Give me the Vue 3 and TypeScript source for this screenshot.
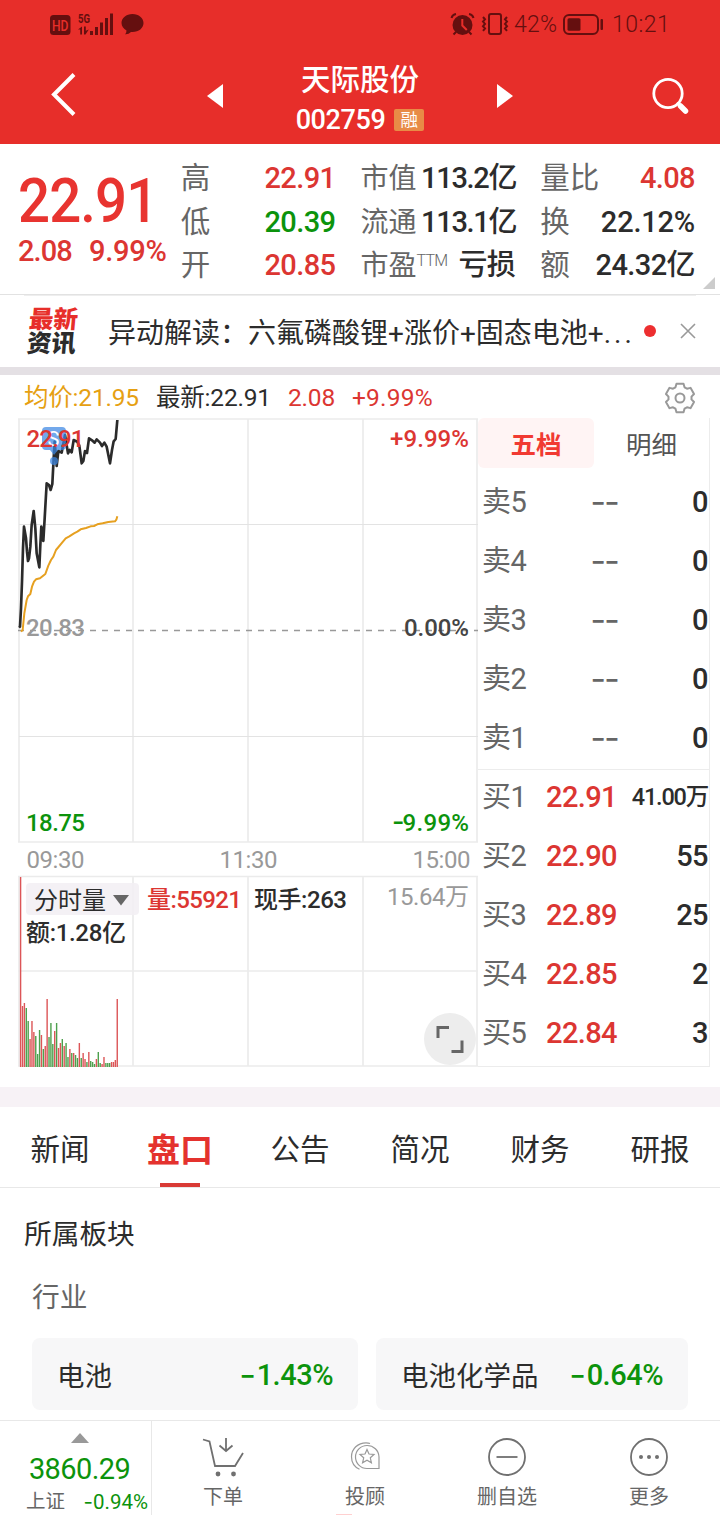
<script setup lang="ts">
interface Field { label: string; sup?: string; value: string; tone?: string }
interface Level { name: string; price: string; qty: string; small?: boolean }

const columns: Field[][] = [
  [
    { label: '高', value: '22.91', tone: 'up' },
    { label: '低', value: '20.39', tone: 'down' },
    { label: '开', value: '20.85', tone: 'up' },
  ],
  [
    { label: '市值', value: '113.2亿' },
    { label: '流通', value: '113.1亿' },
    { label: '市盈', sup: 'TTM', value: '亏损' },
  ],
  [
    { label: '量比', value: '4.08', tone: 'up' },
    { label: '换', value: '22.12%' },
    { label: '额', value: '24.32亿' },
  ],
]

const sells: Level[] = ['卖5', '卖4', '卖3', '卖2', '卖1'].map((name) => ({ name, price: '--', qty: '0' }))
const buys: Level[] = [
  { name: '买1', price: '22.91', qty: '41.00万', small: true },
  { name: '买2', price: '22.90', qty: '55' },
  { name: '买3', price: '22.89', qty: '25' },
  { name: '买4', price: '22.85', qty: '2' },
  { name: '买5', price: '22.84', qty: '3' },
]

const tabs = ['新闻', '盘口', '公告', '简况', '财务', '研报']

// Polyline points use a grid of three units per pixel.
const pricePoints =
  '57,758 60,755 63,700 66,620 69,520 72,455 78,490 81,530 84,558 87,550 91,515 95,450 101,408 106,460 110,535 118,577 121,510 124,455 130,498 134,430 140,325 147,330 152,345 157,327 161,250 164,200 170,273 175,228 185,233 195,180 204,235 209,225 215,232 221,195 232,200 238,212 245,265 250,258 255,228 261,234 267,190 276,196 284,203 290,193 300,203 306,213 313,203 320,215 330,265 336,225 341,199 347,192 352,135'
const averagePoints =
  '63,770 68,765 73,715 80,675 84,664 91,657 96,635 102,620 108,613 120,610 136,597 145,572 153,555 160,545 168,525 182,508 197,490 208,484 222,475 232,470 242,463 258,459 272,454 282,453 292,448 308,445 325,441 345,439 349,434 352,424'

const volumes =
  'r190 r61 r64 g59 g46 r28 r46 r35 g31 g13 g37 r32 g18 r21 r68 g30 g44 g23 r36 g44 r19 r24 g28 r21 g24 g10 r18 g14 r14 g12 g9 r24 g9 r14 r8 g5 r15 g6 g5 g3 r8 g15 g4 r3 r10 g4 g4 g4 r5 r5 r7 r68'
    .split(' ')
    .map((v, i) => {
      const h = Number(v.slice(1))
      return { x: 19.9 + i * 1.895, y: 1067 - h, h, up: v[0] === 'r' }
    })

const gearPoints = Array.from({ length: 6 }, (_, i) =>
  [[-23, 11.6], [-14, 14.6], [14, 14.6], [23, 11.6]].map(([a, r]) => {
    const t = ((i * 60 + a - 90) * Math.PI) / 180
    return `${(17 + r * Math.cos(t)).toFixed(2)},${(17 + r * Math.sin(t)).toFixed(2)}`
  }).join(' '),
).join(' ')
</script>

<template>
  <div class="app">
    <header class="top">
      <div class="status">
        <svg class="status-left" width="100" height="26" viewBox="48 11 100 26">
          <rect x="50" y="15" width="20.5" height="20" rx="3.5" />
          <text class="hd" x="52" y="30.5" textLength="16.5" lengthAdjust="spacingAndGlyphs">HD</text>
          <text class="g5" x="78" y="23" textLength="12" lengthAdjust="spacingAndGlyphs">5G</text>
          <path d="M78 29.500l4-3v8h-1.800v-5zM84 26.500h1.800v4.200l3-1.200-3.300 5H84z" />
          <path d="M90 31h3v4h-3zM95 27h3v8h-3zM100 22.500h3V35h-3zM105 18h3v17h-3zM110 13.500h3V35h-3z" />
          <path d="M132.500 14c6.300 0 11 4 11 9s-4.700 9-11 9h-1.500q-2.500 2.500-6 2.200 1.500-1.200 1.500-3.700c-3-1.600-5-4.300-5-7.500 0-5 4.700-9 11-9z" />
        </svg>
        <div class="status-right">
          <svg width="56" height="26" viewBox="450 11 56 26">
            <circle cx="462.500" cy="25" r="10" />
            <path class="dark-line" d="M451.500 18q1-3.500 4.500-4M473.500 18q-1-3.500-4.500-4M456 32l-2.500 2.500M469 32l2.500 2.500" />
            <path class="red-line" d="M462.300 19v6.500l4.500 4.500" />
            <rect class="dark-line" x="489" y="14" width="12" height="20" rx="2" />
            <path class="dark-line" d="M483 17l2 2.300-2 2.300 2 2.300-2 2.300 2 2.300-2 2.300M507 17l-2 2.300 2 2.300-2 2.300 2 2.300-2 2.300 2 2.300" />
          </svg>
          <span class="percent">42%</span>
          <svg width="42" height="24" viewBox="562 12 42 24">
            <rect class="dark-line" x="564" y="15" width="34" height="19" rx="5" />
            <rect x="567.500" y="18.300" width="13" height="12.500" rx="1.500" />
            <rect x="600.500" y="19" width="2.500" height="11" rx="1" />
          </svg>
          <span class="clock">10:21</span>
        </div>
      </div>
      <div class="nav">
        <svg class="back" width="30" height="46" viewBox="49 72 30 46"><path d="M74 73.500L54 93.500l20 20" /></svg>
        <svg class="arrow" width="18" height="26" viewBox="206 83 18 26"><path d="M207 96l16-12v24z" /></svg>
        <div class="title">
          <div class="name">天际股份</div>
          <div class="code"><span>002759</span><i>融</i></div>
        </div>
        <svg class="arrow" width="18" height="26" viewBox="496 83 18 26"><path d="M513 96l-16-12v24z" /></svg>
        <svg class="search" width="38" height="38" viewBox="651 77 38 38">
          <circle cx="668" cy="93.500" r="14.200" /><path class="thin" d="M678 103.500l3 3" /><path d="M680.500 106l5 5" />
        </svg>
      </div>
    </header>

    <section class="quote">
      <div class="last">
        <div class="price">22.91</div>
        <div class="delta"><span>2.08</span><span>9.99%</span></div>
      </div>
      <div v-for="(col, c) in columns" :key="c" class="col">
        <div v-for="f in col" :key="f.label" class="field">
          <span class="label">{{ f.label }}<sup v-if="f.sup">{{ f.sup }}</sup></span>
          <b :class="f.tone">{{ f.value }}</b>
        </div>
      </div>
      <svg class="corner" width="12" height="12" viewBox="0 0 12 12"><path d="M12 0v12H0z" /></svg>
    </section>

    <section class="news">
      <div class="news-logo"><b>最新</b><b class="second">资讯</b></div>
      <p class="headline">异动解读：六氟磷酸锂+涨价+固态电池+<span>...</span></p>
      <i class="dot"></i>
      <svg class="close" width="16" height="16" viewBox="0 0 16 16"><path d="M1 1l14 14M15 1L1 15" /></svg>
    </section>

    <section class="market">
      <div class="market-head">
        <span class="avg">均价:21.95</span>
        <span class="latest">最新:22.91</span>
        <span class="red">2.08</span>
        <span class="red wide">+9.99%</span>
        <svg class="gear" width="34" height="34" viewBox="0 0 34 34">
          <polygon :points="gearPoints" /><circle cx="17" cy="17" r="4.500" />
        </svg>
      </div>
      <div class="market-body">
        <svg class="chart" width="478" height="650" viewBox="0 418 478 650">
          <g class="grid">
            <path d="M18 419H478M18 842H478M18 876.500H478M18 971H478M18 1066H478" />
            <path d="M19 419V842M133 419V842M248 419V842M363 419V842M477 419V842M19 876V1066M133 876V1066M248 876V1066M363 876V1066M477 876V1066" />
            <path class="hair" d="M19 524.500H478M19 736.500H478" />
          </g>
          <path class="dash" d="M18 630.500H478" />
          <g transform="translate(0 375) scale(.33333)">
            <polyline class="avg-line" :points="averagePoints" />
            <polyline class="price-line" :points="pricePoints" />
          </g>
          <g class="marker">
            <path d="M46 427H62a4 4 0 0 1 4 4V446a4 4 0 0 1-4 4H58l-4 5-4-5H46a4 4 0 0 1-4-4V431a4 4 0 0 1 4-4z" />
            <circle cx="54" cy="461" r="4" />
            <text x="47.500" y="446">S</text>
          </g>
          <g class="labels">
            <text class="up" x="26.500" y="447" textLength="58">22.91</text>
            <text class="up" x="390" y="447" textLength="79">+9.99%</text>
            <text class="mute" x="26" y="635.700" textLength="59">20.83</text>
            <text class="mid" x="404" y="635.700" textLength="65">0.00%</text>
            <text class="down" x="26" y="831" textLength="59">18.75</text>
            <text class="down" x="402.500" y="831" textLength="66.500">9.99%</text>
            <text class="down sign" x="392" y="831">-</text>
            <g class="time">
              <text x="26.500" y="868" textLength="58">09:30</text>
              <text x="219.500" y="868" textLength="58">11:30</text>
              <text x="412.500" y="868" textLength="58">15:00</text>
            </g>
          </g>
          <g class="bars">
            <rect v-for="(b, i) in volumes" :key="i" :class="{ rise: b.up }" :x="b.x" :y="b.y" width="1.400" :height="b.h" />
          </g>
          <rect class="pill" x="26" y="883" width="113" height="32" rx="4" />
          <path class="caret" d="M113 895h16l-8 10.500z" />
          <g class="labels">
            <text class="ink plain" x="34" y="908.500" textLength="72">分时量</text>
            <text class="up" x="147" y="908" textLength="95">量:55921</text>
            <text class="ink" x="254" y="908" textLength="93">现手:263</text>
            <text class="ink" x="26" y="941" textLength="100">额:1.28亿</text>
            <text class="mute plain" x="387" y="904.500" textLength="82">15.64万</text>
          </g>
          <circle class="expand" cx="450" cy="1039" r="26" />
          <path class="expand-icon" d="M438 1038v-10.500h11M462 1040.500v11h-10.500" />
        </svg>
        <div class="book">
          <div class="book-tabs"><b>五档</b><span>明细</span></div>
          <div v-for="l in sells" :key="l.name" class="level">
            <span>{{ l.name }}</span><em class="none">{{ l.price }}</em><b>{{ l.qty }}</b>
          </div>
          <div class="buys">
            <div v-for="l in buys" :key="l.name" class="level">
              <span>{{ l.name }}</span><em>{{ l.price }}</em><b :class="{ small: l.small }">{{ l.qty }}</b>
            </div>
          </div>
        </div>
      </div>
    </section>

    <nav class="tabs">
      <div v-for="(t, i) in tabs" :key="t" class="tab" :class="{ active: i === 1 }">{{ t }}</div>
    </nav>

    <section class="sector">
      <h2>所属板块</h2>
      <h3>行业</h3>
      <div class="cards">
        <div class="card first"><span>电池</span><b><i>-</i>1.43%</b></div>
        <div class="card"><span>电池化学品</span><b><i>-</i>0.64%</b></div>
      </div>
    </section>

    <footer class="bottom">
      <div class="index">
        <svg width="18" height="10" viewBox="0 0 18 10"><path d="M9 0l9 10H0z" /></svg>
        <strong>3860.29</strong>
        <div class="index-row"><span>上证</span><em><i>-</i>0.94%</em></div>
      </div>
      <div class="action">
        <svg width="44" height="40" viewBox="201 1437 44 40">
          <path d="M203 1439.500l6.500 2 5.500 24.500h20l8-13M226 1438v13M219.500 1445.500l6.500 5.500 6.500-5.500" />
          <circle class="solid" cx="218" cy="1474" r="2.400" /><circle class="solid" cx="233.500" cy="1474" r="2.400" />
        </svg>
        <span>下单</span>
      </div>
      <div class="action advisor">
        <svg width="44" height="40" viewBox="343 1437 44 40">
          <path d="M367 1445.500a11.500 11.500 0 0 0 0 23h12v-11.500a11.800 11.800 0 0 0-12-11.500zM370 1443.500q-1.500-.7-4-.7c-8 0-14.500 6-14.500 14 0 6 3.500 10.500 8 12.500" />
          <path d="M367 1449.500l2 4.500 5 .5-3.700 3.300 1.100 4.900-4.400-2.500-4.400 2.500 1.100-4.900-3.700-3.300 5-.5z" />
        </svg>
        <span>投顾</span>
      </div>
      <div class="action">
        <svg width="44" height="40" viewBox="0 0 44 40"><circle cx="22" cy="20" r="18" /><path d="M11.500 20h21" /></svg>
        <span>删自选</span>
      </div>
      <div class="action">
        <svg width="44" height="40" viewBox="0 0 44 40">
          <circle cx="22" cy="20" r="18" />
          <circle class="solid" cx="14" cy="20" r="2" /><circle class="solid" cx="22" cy="20" r="2" /><circle class="solid" cx="30" cy="20" r="2" />
        </svg>
        <span>更多</span>
      </div>
    </footer>
  </div>
</template>

<style>
body { margin: 0; background: #fff; }
</style>

<style scoped>
.app { width: 720px; height: 1515px; overflow: hidden; background: #fff; color: #2c2c2c; font-family: Roboto, "Noto Sans CJK SC", sans-serif; box-sizing: border-box; }
.app * { box-sizing: border-box; }
svg { display: block; flex: none; overflow: visible; }
i, em { font-style: normal; }
.up { color: #dc3632; fill: #dc3632; }
.down { color: #0c930c; fill: #0c930c; }

.top { height: 144px; background: #e72e2a; color: #fff; }
.status { height: 48px; padding: 11px 51px 11px 48px; display: flex; justify-content: space-between; align-items: center; fill: #650f0f; color: #650f0f; }
.hd { font: 500 15px Roboto; fill: #e72e2a; }
.g5 { font: 700 12.500px Roboto; }
.status-right { display: flex; align-items: center; font-size: 23px; font-weight: 300; line-height: 26px; }
.status-right span { padding-top: 2px; }
.percent { width: 48px; margin-left: 8px; letter-spacing: .3px; }
.clock { width: 57px; margin-left: 8px; letter-spacing: .5px; }
.dark-line { fill: none; stroke: #650f0f; stroke-width: 2; }
.red-line { fill: none; stroke: #e72e2a; stroke-width: 2; }
.nav { height: 96px; display: flex; align-items: center; padding: 0 31px 0 49px; }
.back path { fill: none; stroke: #fff; stroke-width: 4; }
.arrow { fill: #fff; margin-left: 127px; }
.title { width: 272px; text-align: center; padding-top: 8px; }
.title + .arrow { margin-left: 0; }
.name { font-size: 29.500px; font-weight: 500; line-height: 40px; margin-top: -1px; }
.code { display: flex; justify-content: center; align-items: center; height: 40px; font-size: 27px; font-weight: 500; letter-spacing: -.4px; padding-top: 1px; }
.code i { width: 30px; height: 22px; margin-left: 9px; border-radius: 2px; background: #e88b46; font-size: 17.500px; font-weight: 400; line-height: 22px; letter-spacing: 0; }
.search { margin-left: 137px; }
.search circle, .search path { fill: none; stroke: #fff; stroke-width: 2.800; }
.search path { stroke-width: 5.500; stroke-linecap: round; }
.search .thin { stroke-width: 3; }

.quote { height: 151px; border-bottom: 1px solid #e2e2e2; display: flex; padding-top: 13px; position: relative; }
.last { width: 181px; padding-left: 18px; color: #e83430; }
.price { font-size: 61px; font-weight: 500; letter-spacing: -1px; line-height: 70px; margin-top: 9px; margin-bottom: -1px; transform: scaleX(.925); transform-origin: 0 50%; }
.delta { display: flex; gap: 17px; font-size: 29px; letter-spacing: -.9px; line-height: 32px; color: #dc3632; font-weight: 500; }
.delta span:last-child { letter-spacing: -.2px; }
.col { width: 155px; margin-right: 25px; }
.field { display: flex; justify-content: space-between; height: 43.500px; line-height: 43.500px; white-space: nowrap; }
.label { color: #666; font-size: 29.500px; font-weight: 400; }
.col:nth-child(3) .label { font-size: 28px; }
.col:nth-child(3) b { letter-spacing: -1.300px; margin-right: -1px; }
.col:nth-child(3) .field:last-child b { letter-spacing: -.6px; margin-right: 0; }
sup { font-size: 16px; font-weight: 300; letter-spacing: -.8px; vertical-align: 9px; line-height: 0; }
.field b { font-size: 29px; font-weight: 500; letter-spacing: -.6px; }
.col:nth-child(4) .field:nth-child(2) b { letter-spacing: -.2px; }
.corner { position: absolute; right: 5px; bottom: 5px; fill: #ccc; }

.news { height: 72px; display: flex; align-items: center; padding-left: 27px; position: relative; }
.news::before { content: ""; position: absolute; left: 24px; right: 24px; top: 0; height: 1px; background: #eee; }
.news-logo { width: 81px; height: 48px; transform: translate(1px, 1px) skewX(-5deg); font-size: 24.500px; line-height: 24px; color: #e72e2a; }
.news-logo b { display: block; height: 24px; font-weight: 900; }
.news-logo .second { color: #2c2c2c; }
.headline { margin: 0; padding-top: 6px; width: 536px; font-size: 28px; font-weight: 400; line-height: 40px; white-space: nowrap; }
.headline span { letter-spacing: 3px; }
.dot { width: 12px; height: 12px; border-radius: 50%; background: #ed2e30; }
.close { margin-left: 24px; fill: none; stroke: #999; stroke-width: 1.600; }

.market { border-top: 8px solid #e4e0e4; border-bottom: 20px solid #f7f2f6; height: 740px; }
.market-head { height: 43px; display: flex; align-items: center; padding: 3px 23px 0 24px; font-size: 24.500px; line-height: 30px; letter-spacing: -.2px; }
.avg { color: #e6a012; width: 132px; }
.latest { width: 132px; }
.red { color: #dc3632; margin-right: 17px; }
.wide { letter-spacing: .2px; }
.gear { margin-left: auto; fill: none; stroke: #999; stroke-width: 2; stroke-linejoin: round; }
.market-body { display: flex; }
.grid path { stroke: #ebebeb; stroke-width: 1.700; fill: none; }
.grid .hair { stroke-width: 1; stroke: #e3e3e3; }
.dash { stroke: #999; stroke-width: 1.600; stroke-dasharray: 6 6; }
.price-line, .avg-line { fill: none; stroke: #2b2b2b; stroke-width: 8; stroke-linejoin: round; }
.avg-line { stroke: #e6a020; stroke-width: 6; }
.marker { fill: #3b86e3; fill-opacity: .72; }
.marker text { fill: #fff; fill-opacity: 1; font-size: 20px; }
.labels text { font-size: 24px; font-weight: 500; }
.labels .mute { fill: #999; }
.labels .mid { fill: #444; }
.labels .ink { fill: #2c2c2c; }
.labels .plain, .labels .time text { font-weight: 400; }
.labels .time text { fill: #999; }
.labels .sign { font-family: Inter; font-size: 27px; }
.bars rect { fill: #4da04d; }
.bars .rise { fill: #dc5557; }
.pill { fill: #f2eff3; opacity: .85; }
.caret { fill: #666; }
.expand { fill: #ededed; }
.expand-icon { fill: none; stroke: #666; stroke-width: 3; }

.book { width: 232px; height: 649px; border: 1px solid #ececec; border-width: 0 1px 1px 0; }
.book-tabs { height: 54px; display: flex; align-items: flex-start; line-height: 54px; text-align: center; font-size: 25.500px; color: #555; }
.book-tabs b { width: 116px; height: 50px; background: #fff4f4; color: #f13a32; border-radius: 6px; margin-right: 0; }
.book-tabs span { flex: 1; }
.level { height: 59px; display: grid; grid-template-columns: 64px 74px 1fr; line-height: 60px; padding: 0 1px 0 4px; font-size: 29px; }
.level > * { height: 59px; }
.level span { color: #666; font-weight: 400; letter-spacing: -.5px; }
.level em { color: #dc3632; font-weight: 500; letter-spacing: -.6px; }
.level .none { color: #666; font-family: Inter; font-size: 29px; letter-spacing: -1.500px; text-align: right; margin-right: 2px; transform: scaleX(1.150); transform-origin: 100% 50%; }
.level b { text-align: right; font-weight: 500; letter-spacing: -.6px; white-space: nowrap; }
.level .small { font-size: 23.500px; letter-spacing: -1.200px; }
.buys { position: relative; }
.buys::before { content: ""; position: absolute; left: 0; right: 0; top: 2px; height: 1px; background: #ececec; }

.tabs { height: 81px; border-bottom: 1px solid #e8e8e8; display: flex; }
.tab { width: 120px; text-align: center; font-size: 29.500px; line-height: 87px; height: 80px; position: relative; }
.active { color: #e4322e; font-size: 33px; font-weight: 700; }
.active::after { content: ""; position: absolute; left: 40px; bottom: 0; width: 40px; height: 4px; background: #d93a35; }

.sector { height: 232px; padding: 27px 32px 0; }
h2, h3 { margin: 0; font-size: 27.700px; line-height: 40px; font-weight: 400; }
h2 { margin-left: -8px; }
h3 { margin-top: 23px; color: #666; }
.cards { display: flex; gap: 18px; margin-top: 20px; }
.card { width: 312px; height: 72px; border-radius: 8px; background: #f7f7f8; display: flex; justify-content: space-between; align-items: center; padding: 2px 25px 0; font-size: 27.500px; line-height: 40px; }
.card span { padding-top: 3px; }
.first { width: 326px; }
.card b { color: #0c930c; font-weight: 500; font-size: 29px; letter-spacing: -.5px; }
.card i { display: inline-block; font-family: Inter; letter-spacing: 0; margin-right: 2px; transform: scaleX(1.250); }

.bottom { height: 95px; border-top: 1px solid #e8e8e8; display: flex; background: #fff; }
.index { width: 152px; border-right: 1px solid #e8e8e8; padding-top: 12px; text-align: center; color: #0c930c; }
.index svg { margin: 0 auto 0 71px; fill: #999; }
.index strong { display: block; margin-top: 8px; padding-left: 8px; font-size: 29px; font-weight: 400; line-height: 36px; letter-spacing: -.6px; }
.index-row { display: flex; justify-content: space-between; padding: 1px 3px 0 26px; font-size: 20.500px; line-height: 28px; }
.index-row span { color: #666; font-size: 19.500px; }
.index-row i { font-family: Inter; }
.action { width: 142px; display: flex; flex-direction: column; align-items: center; padding-top: 16px; color: #666; font-size: 20px; line-height: 28px; }
.action svg { fill: none; stroke: #707070; stroke-width: 1.800; }
.action span { margin-top: 6px; }
.action .solid { fill: #707070; stroke: none; }
.advisor svg { stroke: #999; stroke-width: 1.200; }
.advisor { position: relative; }
.advisor::after { content: ""; position: absolute; left: 42px; bottom: 0; width: 16px; height: 1px; background: #ffd0d0; }
</style>
